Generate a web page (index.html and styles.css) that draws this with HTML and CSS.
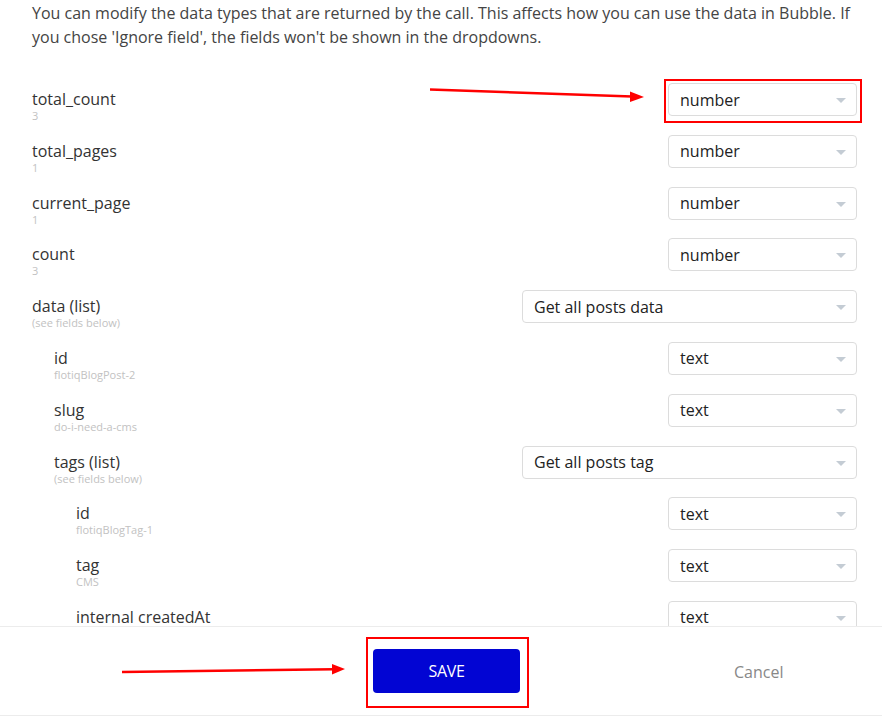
FILE: index.html
```html
<!DOCTYPE html>
<html>
<head>
<meta charset="utf-8">
<link rel="stylesheet" href="styles.css">
</head>
<body>
<div class="page">
  <div class="scroll">
    <p class="intro">You can modify the data types that are returned by the call. This affects how you can use the data in Bubble. If you chose 'Ignore field', the fields won't be shown in the dropdowns.</p>
    <div class="fields">
      <div class="row"><div class="lbl"><div class="name">total_count</div><div class="sub">3</div></div><div class="dd"><span>number</span><i class="caret"></i></div></div>
      <div class="row"><div class="lbl"><div class="name">total_pages</div><div class="sub">1</div></div><div class="dd"><span>number</span><i class="caret"></i></div></div>
      <div class="row"><div class="lbl"><div class="name">current_page</div><div class="sub">1</div></div><div class="dd"><span>number</span><i class="caret"></i></div></div>
      <div class="row"><div class="lbl"><div class="name">count</div><div class="sub">3</div></div><div class="dd"><span>number</span><i class="caret"></i></div></div>
      <div class="row"><div class="lbl"><div class="name">data (list)</div><div class="sub">(see fields below)</div></div><div class="dd wide"><span>Get all posts data</span><i class="caret"></i></div></div>
      <div class="row l1"><div class="lbl"><div class="name">id</div><div class="sub">flotiqBlogPost-2</div></div><div class="dd"><span>text</span><i class="caret"></i></div></div>
      <div class="row l1"><div class="lbl"><div class="name">slug</div><div class="sub">do-i-need-a-cms</div></div><div class="dd"><span>text</span><i class="caret"></i></div></div>
      <div class="row l1"><div class="lbl"><div class="name">tags (list)</div><div class="sub">(see fields below)</div></div><div class="dd wide"><span>Get all posts tag</span><i class="caret"></i></div></div>
      <div class="row l2"><div class="lbl"><div class="name">id</div><div class="sub">flotiqBlogTag-1</div></div><div class="dd"><span>text</span><i class="caret"></i></div></div>
      <div class="row l2"><div class="lbl"><div class="name">tag</div><div class="sub">CMS</div></div><div class="dd"><span>text</span><i class="caret"></i></div></div>
      <div class="row l2"><div class="lbl"><div class="name">internal createdAt</div></div><div class="dd"><span>text</span><i class="caret"></i></div></div>
    </div>
  </div>
  <div class="footer">
    <button class="save">SAVE</button>
    <span class="cancel">Cancel</span>
  </div>
</div>
<div class="annot box1"></div>
<div class="annot box2"></div>
<svg class="arrows" width="882" height="720" viewBox="0 0 882 720">
  <line x1="430" y1="89.5" x2="632" y2="96.6" stroke="#f00" stroke-width="2.5"/>
  <polygon points="644,97 630,91.5 630,102" fill="#f00"/>
  <line x1="122" y1="672" x2="334" y2="669.3" stroke="#f00" stroke-width="2.5"/>
  <polygon points="345,669 332,664 332,674.5" fill="#f00"/>
</svg>
</body>
</html>
```

FILE: styles.css
```css
html, body {
  margin: 0;
  padding: 0;
  background: #fff;
}
body {
  font-family: "Open Sans", "Noto Sans", sans-serif;
  color: #333;
  width: 882px;
  height: 720px;
  overflow: hidden;
  position: relative;
}
.page {
  display: flex;
  flex-direction: column;
}
.scroll {
  height: 626px;
  overflow: hidden;
  padding: 0 25px 0 32px;
  box-sizing: border-box;
}
.intro {
  margin: 1px 0 0;
  font-size: 16px;
  line-height: 24px;
  color: #444;
}
.fields {
  margin-top: 34px;
  display: flex;
  flex-direction: column;
  gap: 18.8px;
}
.row {
  display: flex;
  justify-content: space-between;
  align-items: flex-start;
  height: 33px;
}
.row.l1 { padding-left: 22px; }
.row.l2 { padding-left: 44px; }
.lbl {
  padding-top: 5px;
}
.name {
  font-size: 16px;
  line-height: 22px;
  color: #333;
  white-space: nowrap;
}
.sub {
  font-size: 11px;
  line-height: 12px;
  color: #c2c2c2;
  white-space: nowrap;
}
.dd {
  width: 189px;
  height: 33px;
  box-sizing: border-box;
  border: 1px solid #dcdcdc;
  border-radius: 4px;
  display: flex;
  align-items: center;
  justify-content: space-between;
  padding: 0 10px 0 11px;
  font-size: 16px;
  color: #222;
  background: #fff;
}
.dd.wide { width: 335px; }
.caret {
  width: 0;
  height: 0;
  border-left: 5.5px solid transparent;
  border-right: 5.5px solid transparent;
  border-top: 5px solid #c4ccd4;
  margin-top: 2px;
}
.footer {
  height: 90px;
  box-sizing: border-box;
  border-top: 1px solid #ececec;
  border-bottom: 1px solid #ececec;
  display: flex;
  align-items: center;
  padding-left: 373px;
}
.save {
  width: 147px;
  height: 44px;
  background: #0205d3;
  border: none;
  border-radius: 4px;
  color: #fff;
  font-family: "Open Sans", "Noto Sans", sans-serif;
  font-size: 16px;
  letter-spacing: -0.3px;
}
.cancel {
  margin-left: 214px;
  font-size: 16px;
  color: #888;
  margin-top: 2px;
}
.annot {
  position: absolute;
  border: 2.5px solid #f00;
  box-sizing: border-box;
}
.box1 {
  left: 664px;
  top: 79px;
  width: 198px;
  height: 44px;
}
.box2 {
  left: 366px;
  top: 637px;
  width: 163px;
  height: 71px;
}
.arrows {
  position: absolute;
  left: 0;
  top: 0;
  pointer-events: none;
}
```
